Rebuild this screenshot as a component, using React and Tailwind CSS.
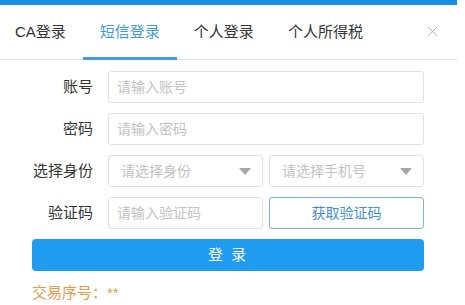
import { X } from 'lucide-react';

const font = { fontFamily: '"Liberation Sans", "Noto Sans CJK SC", sans-serif' };

const tabs = ['CA登录', '短信登录', '个人登录', '个人所得税'];

function Caret() {
    return (
        <svg width="12" height="7" viewBox="0 0 12 7" className="shrink-0">
            <path d="M0 0 L12 0 L6 7 Z" fill="#a8a8a8" />
        </svg>
    );
}

function Row({ label, children }) {
    return (
        <div className="flex h-[32px] items-center">
            <div className="w-[61px] text-right text-[15px] text-[#333]">{label}</div>
            <div className="ml-[15px] flex w-[316px] justify-between">{children}</div>
        </div>
    );
}

function Input({ placeholder, half }) {
    return (
        <div
            className={
                (half ? 'w-[155px] ' : 'w-[316px] ') +
                'flex h-[32px] items-center rounded-[3px] border border-[#e2e2e2] px-[8px] text-[14px] text-[#c2c2c2]'
            }
        >
            {placeholder}
        </div>
    );
}

function Select({ placeholder }) {
    return (
        <div className="flex h-[32px] w-[155px] items-center justify-between rounded-[3px] border border-[#e2e2e2] pl-[12px] pr-[11px] text-[14px] text-[#c2c2c2]">
            <span>{placeholder}</span>
            <Caret />
        </div>
    );
}

export default function App() {
    return (
        <div className="h-[305px] w-[465px] bg-white" style={font}>
            <div className="h-[305px] w-[457px] border-t-[5px] border-[#1a8ee2]">
                {/* tab header */}
                <div className="flex h-[55px] items-stretch border-b border-[#e3e3e3] pl-[15px]">
                    {tabs.map((t, i) => (
                        <div
                            key={t}
                            className={
                                i === 1
                                    ? 'mb-[-1px] flex items-center border-b-[3px] border-[#3d9be6] px-[17px] pt-[3px] text-[15px] text-[#3d98e0]'
                                    : i === 0
                                      ? 'flex items-center pr-[17px] text-[15px] text-[#333]'
                                      : 'flex items-center px-[17px] text-[15px] text-[#333]'
                            }
                        >
                            {t}
                        </div>
                    ))}
                    <div className="ml-auto mr-[16px] flex items-center pb-[2px]">
                        <X size={17} strokeWidth={1.3} color="#b0b0b0" />
                    </div>
                </div>

                {/* form */}
                <div className="flex flex-col gap-[10px] pl-[32px] pt-[11px]">
                    <Row label="账号">
                        <Input placeholder="请输入账号" />
                    </Row>
                    <Row label="密码">
                        <Input placeholder="请输入密码" />
                    </Row>
                    <Row label="选择身份">
                        <Select placeholder="请选择身份" />
                        <Select placeholder="请选择手机号" />
                    </Row>
                    <Row label="验证码">
                        <Input placeholder="请输入验证码" half />
                        <button className="flex h-[32px] w-[155px] items-center justify-center rounded-[3px] border border-[#7db3dc] text-[14px] text-[#3f8fd0]">
                            获取验证码
                        </button>
                    </Row>
                    <button className="h-[32px] w-[392px] rounded-[4px] bg-[#1f9cf0] text-[15px] tracking-[2px] text-white">
                        登 录
                    </button>
                    <div className="mt-[1px] text-[15px] text-[#e59a4c]">交易序号：**</div>
                </div>
            </div>
        </div>
    );
}
